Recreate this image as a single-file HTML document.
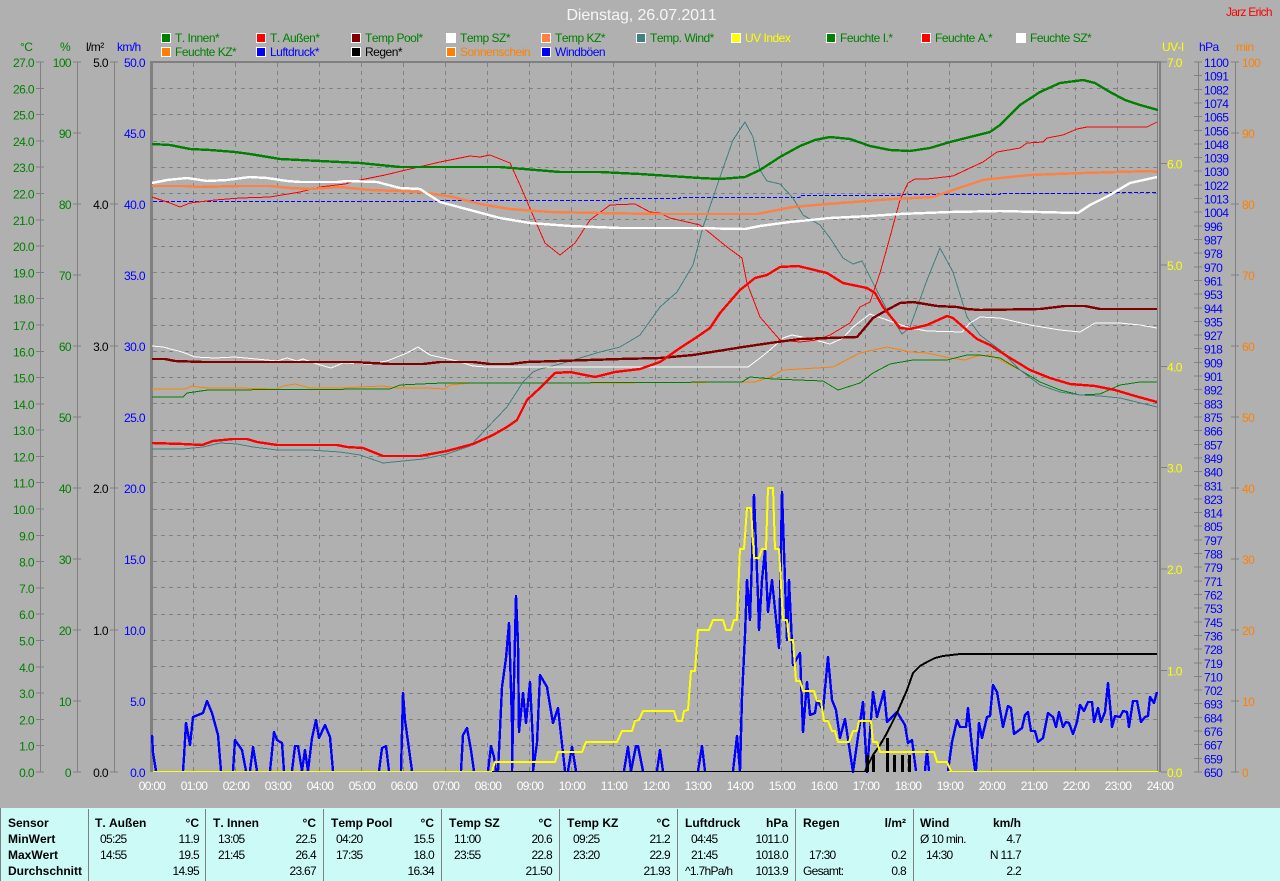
<!DOCTYPE html>
<html lang="de">
<head>
<meta charset="utf-8">
<title>Dienstag, 26.07.2011</title>
<style>
html,body{margin:0;padding:0;background:#b0b0b0;width:1280px;height:881px;overflow:hidden}
svg{display:block;font-family:"Liberation Sans",sans-serif;font-size:12px;letter-spacing:-.6px;font-kerning:none}
.l{fill:none;shape-rendering:crispEdges;stroke-linejoin:round}
.b{font-weight:bold;letter-spacing:0}
.r{text-anchor:end}
</style>
</head>
<body>
<svg width="1280" height="881" viewBox="0 0 1280 881" xmlns="http://www.w3.org/2000/svg">
<rect width="1280" height="881" fill="#b0b0b0"/>

<!-- title -->
<text x="641.5" y="20" text-anchor="middle" fill="#f6f6f6" style="font-size:16px;letter-spacing:-.1px">Dienstag, 26.07.2011</text>
<text x="1226" y="16" fill="#f00" style="letter-spacing:-.75px">Jarz Erich</text>

<!-- legend -->
<g stroke="#fff" shape-rendering="crispEdges">
<rect x="161.5" y="33.5" width="9" height="9" fill="#008000"/>
<rect x="256.5" y="33.5" width="9" height="9" fill="#f00"/>
<rect x="351.5" y="33.5" width="9" height="9" fill="#800000"/>
<rect x="446.5" y="33.5" width="9" height="9" fill="#fff"/>
<rect x="541.5" y="33.5" width="9" height="9" fill="#ff8040"/>
<rect x="636.5" y="33.5" width="9" height="9" fill="#408080"/>
<rect x="731.5" y="33.5" width="9" height="9" fill="#ff0"/>
<rect x="826.5" y="33.5" width="9" height="9" fill="#008000"/>
<rect x="921.5" y="33.5" width="9" height="9" fill="#f00"/>
<rect x="1016.5" y="33.5" width="9" height="9" fill="#fff"/>
<rect x="161.5" y="47.5" width="9" height="9" fill="#ff8000"/>
<rect x="256.5" y="47.5" width="9" height="9" fill="#00f"/>
<rect x="351.5" y="47.5" width="9" height="9" fill="#000"/>
<rect x="446.5" y="47.5" width="9" height="9" fill="#ff8000"/>
<rect x="541.5" y="47.5" width="9" height="9" fill="#00f"/>
</g>
<g fill="#008000" style="letter-spacing:-.5px">
<text x="175" y="42">T. Innen*</text>
<text x="270" y="42">T. Außen*</text>
<text x="365" y="42">Temp Pool*</text>
<text x="460" y="42">Temp SZ*</text>
<text x="555" y="42">Temp KZ*</text>
<text x="650" y="42">Temp. Wind*</text>
<text x="745" y="42" fill="#ff0">UV Index</text>
<text x="840" y="42">Feuchte I.*</text>
<text x="935" y="42">Feuchte A.*</text>
<text x="1030" y="42">Feuchte SZ*</text>
<text x="175" y="56">Feuchte KZ*</text>
<text x="270" y="56" fill="#00f">Luftdruck*</text>
<text x="365" y="56" fill="#000">Regen*</text>
<text x="460" y="56" fill="#ff8000">Sonnenschein</text>
<text x="555" y="56" fill="#00f">Windböen</text>
</g>

<!-- axis headers -->
<text x="20" y="51" fill="#008000">°C</text>
<text x="60" y="51" fill="#008000">%</text>
<text x="86" y="51" fill="#000">l/m²</text>
<text x="117" y="51" fill="#00f">km/h</text>
<text x="1162" y="51" fill="#ff0">UV-I</text>
<text x="1199" y="51" fill="#00f">hPa</text>
<text x="1236" y="51" fill="#ff8000">min</text>

<!-- grid -->
<g class="l" stroke="#808080" stroke-dasharray="4 4">
<path d="M153 88.5H1158M153 114.5H1158M153 141.5H1158M153 167.5H1158M153 193.5H1158M153 219.5H1158M153 246.5H1158M153 272.5H1158M153 298.5H1158M153 325.5H1158M153 351.5H1158M153 377.5H1158M153 403.5H1158M153 430.5H1158M153 456.5H1158M153 482.5H1158M153 509.5H1158M153 535.5H1158M153 561.5H1158M153 587.5H1158M153 614.5H1158M153 640.5H1158M153 666.5H1158M153 693.5H1158M153 719.5H1158M153 745.5H1158"/>
<path d="M193.5 63V772M235.5 63V772M277.5 63V772M319.5 63V772M361.5 63V772M403.5 63V772M445.5 63V772M487.5 63V772M529.5 63V772M571.5 63V772M613.5 63V772M655.5 63V772M697.5 63V772M739.5 63V772M781.5 63V772M823.5 63V772M865.5 63V772M907.5 63V772M949.5 63V772M991.5 63V772M1033.5 63V772M1075.5 63V772M1117.5 63V772"/>
</g>

<!-- frame and axes -->
<g fill="#808080" shape-rendering="crispEdges">
<rect x="150" y="61" width="3" height="711"/>
<rect x="150" y="61" width="1011" height="2"/>
<rect x="1157" y="61" width="1" height="711"/>
<rect x="1159" y="61" width="2" height="711"/>
<rect x="40" y="62" width="1" height="710"/>
<rect x="77" y="62" width="1" height="710"/>
<rect x="114" y="62" width="1" height="710"/>
<rect x="1198" y="62" width="1" height="710"/>
<rect x="1235" y="62" width="1" height="710"/>
</g>
<g class="l" stroke="#808080">
<path d="M40 61.5V773" stroke-width="8" stroke-dasharray="1 25.296"/>
<path d="M77 61.5V773" stroke-width="8" stroke-dasharray="1 70"/>
<path d="M114 61.5V773" stroke-width="8" stroke-dasharray="1 141"/>
<path d="M1198 61.5V773" stroke-width="8" stroke-dasharray="1 12.654"/>
<path d="M1235 61.5V773" stroke-width="8" stroke-dasharray="1 70"/>
<path d="M1164 61.5V773" stroke-width="6" stroke-dasharray="1 100.43"/>
</g>

<!-- axis labels -->
<text fill="#008000" class="r" y="67"><tspan x="34">27.0</tspan><tspan x="34" dy="26.296">26.0</tspan><tspan x="34" dy="26.296">25.0</tspan><tspan x="34" dy="26.296">24.0</tspan><tspan x="34" dy="26.296">23.0</tspan><tspan x="34" dy="26.296">22.0</tspan><tspan x="34" dy="26.296">21.0</tspan><tspan x="34" dy="26.296">20.0</tspan><tspan x="34" dy="26.296">19.0</tspan><tspan x="34" dy="26.296">18.0</tspan><tspan x="34" dy="26.296">17.0</tspan><tspan x="34" dy="26.296">16.0</tspan><tspan x="34" dy="26.296">15.0</tspan><tspan x="34" dy="26.296">14.0</tspan><tspan x="34" dy="26.296">13.0</tspan><tspan x="34" dy="26.296">12.0</tspan><tspan x="34" dy="26.296">11.0</tspan><tspan x="34" dy="26.296">10.0</tspan><tspan x="34" dy="26.296">9.0</tspan><tspan x="34" dy="26.296">8.0</tspan><tspan x="34" dy="26.296">7.0</tspan><tspan x="34" dy="26.296">6.0</tspan><tspan x="34" dy="26.296">5.0</tspan><tspan x="34" dy="26.296">4.0</tspan><tspan x="34" dy="26.296">3.0</tspan><tspan x="34" dy="26.296">2.0</tspan><tspan x="34" dy="26.296">1.0</tspan><tspan x="34" dy="26.296">0.0</tspan></text>
<text fill="#008000" class="r" y="67"><tspan x="71">100</tspan><tspan x="71" dy="71">90</tspan><tspan x="71" dy="71">80</tspan><tspan x="71" dy="71">70</tspan><tspan x="71" dy="71">60</tspan><tspan x="71" dy="71">50</tspan><tspan x="71" dy="71">40</tspan><tspan x="71" dy="71">30</tspan><tspan x="71" dy="71">20</tspan><tspan x="71" dy="71">10</tspan><tspan x="71" dy="71">0</tspan></text>
<text fill="#000" class="r" y="67"><tspan x="108">5.0</tspan><tspan x="108" dy="142">4.0</tspan><tspan x="108" dy="142">3.0</tspan><tspan x="108" dy="142">2.0</tspan><tspan x="108" dy="142">1.0</tspan><tspan x="108" dy="142">0.0</tspan></text>
<text fill="#00f" class="r" y="67"><tspan x="145">50.0</tspan><tspan x="145" dy="71">45.0</tspan><tspan x="145" dy="71">40.0</tspan><tspan x="145" dy="71">35.0</tspan><tspan x="145" dy="71">30.0</tspan><tspan x="145" dy="71">25.0</tspan><tspan x="145" dy="71">20.0</tspan><tspan x="145" dy="71">15.0</tspan><tspan x="145" dy="71">10.0</tspan><tspan x="145" dy="71">5.0</tspan><tspan x="145" dy="71">0.0</tspan></text>
<text fill="#ff0" y="67"><tspan x="1167">7.0</tspan><tspan x="1167" dy="101.43">6.0</tspan><tspan x="1167" dy="101.43">5.0</tspan><tspan x="1167" dy="101.43">4.0</tspan><tspan x="1167" dy="101.43">3.0</tspan><tspan x="1167" dy="101.43">2.0</tspan><tspan x="1167" dy="101.43">1.0</tspan><tspan x="1167" dy="101.43">0.0</tspan></text>
<text fill="#00f" y="67"><tspan x="1204">1100</tspan><tspan x="1204" dy="13.654">1091</tspan><tspan x="1204" dy="13.654">1082</tspan><tspan x="1204" dy="13.654">1074</tspan><tspan x="1204" dy="13.654">1065</tspan><tspan x="1204" dy="13.654">1056</tspan><tspan x="1204" dy="13.654">1048</tspan><tspan x="1204" dy="13.654">1039</tspan><tspan x="1204" dy="13.654">1030</tspan><tspan x="1204" dy="13.654">1022</tspan><tspan x="1204" dy="13.654">1013</tspan><tspan x="1204" dy="13.654">1004</tspan><tspan x="1204" dy="13.654">996</tspan><tspan x="1204" dy="13.654">987</tspan><tspan x="1204" dy="13.654">978</tspan><tspan x="1204" dy="13.654">970</tspan><tspan x="1204" dy="13.654">961</tspan><tspan x="1204" dy="13.654">953</tspan><tspan x="1204" dy="13.654">944</tspan><tspan x="1204" dy="13.654">935</tspan><tspan x="1204" dy="13.654">927</tspan><tspan x="1204" dy="13.654">918</tspan><tspan x="1204" dy="13.654">909</tspan><tspan x="1204" dy="13.654">901</tspan><tspan x="1204" dy="13.654">892</tspan><tspan x="1204" dy="13.654">883</tspan><tspan x="1204" dy="13.654">875</tspan><tspan x="1204" dy="13.654">866</tspan><tspan x="1204" dy="13.654">857</tspan><tspan x="1204" dy="13.654">849</tspan><tspan x="1204" dy="13.654">840</tspan><tspan x="1204" dy="13.654">831</tspan><tspan x="1204" dy="13.654">823</tspan><tspan x="1204" dy="13.654">814</tspan><tspan x="1204" dy="13.654">805</tspan><tspan x="1204" dy="13.654">797</tspan><tspan x="1204" dy="13.654">788</tspan><tspan x="1204" dy="13.654">779</tspan><tspan x="1204" dy="13.654">771</tspan><tspan x="1204" dy="13.654">762</tspan><tspan x="1204" dy="13.654">753</tspan><tspan x="1204" dy="13.654">745</tspan><tspan x="1204" dy="13.654">736</tspan><tspan x="1204" dy="13.654">728</tspan><tspan x="1204" dy="13.654">719</tspan><tspan x="1204" dy="13.654">710</tspan><tspan x="1204" dy="13.654">702</tspan><tspan x="1204" dy="13.654">693</tspan><tspan x="1204" dy="13.654">684</tspan><tspan x="1204" dy="13.654">676</tspan><tspan x="1204" dy="13.654">667</tspan><tspan x="1204" dy="13.654">659</tspan><tspan x="1204" dy="13.654">650</tspan></text>
<text fill="#ff8000" y="67"><tspan x="1242">100</tspan><tspan x="1242" dy="71">90</tspan><tspan x="1242" dy="71">80</tspan><tspan x="1242" dy="71">70</tspan><tspan x="1242" dy="71">60</tspan><tspan x="1242" dy="71">50</tspan><tspan x="1242" dy="71">40</tspan><tspan x="1242" dy="71">30</tspan><tspan x="1242" dy="71">20</tspan><tspan x="1242" dy="71">10</tspan><tspan x="1242" dy="71">0</tspan></text>

<!-- x labels -->
<g fill="#fff" text-anchor="middle" style="letter-spacing:-.7px">
<text x="152" y="790">00:00</text><text x="194" y="790">01:00</text><text x="236" y="790">02:00</text><text x="278" y="790">03:00</text><text x="320" y="790">04:00</text><text x="362" y="790">05:00</text><text x="404" y="790">06:00</text><text x="446" y="790">07:00</text><text x="488" y="790">08:00</text><text x="530" y="790">09:00</text><text x="572" y="790">10:00</text><text x="614" y="790">11:00</text><text x="656" y="790">12:00</text><text x="698" y="790">13:00</text><text x="740" y="790">14:00</text><text x="782" y="790">15:00</text><text x="824" y="790">16:00</text><text x="866" y="790">17:00</text><text x="908" y="790">18:00</text><text x="950" y="790">19:00</text><text x="992" y="790">20:00</text><text x="1034" y="790">21:00</text><text x="1076" y="790">22:00</text><text x="1118" y="790">23:00</text><text x="1160" y="790">24:00</text>
</g>

<!-- series -->
<!-- Luftdruck -->
<path class="l" stroke="#00f" stroke-dasharray="4 2" d="M153 201.5H440V200.5H620V198.5H680V197.5H800V195.5H900V194.5H1000V193.5H1100V192.5H1157"/>
<!-- Feuchte KZ thin -->
<polyline class="l" stroke="#ff8000" points="152,389 185,389 192,386 198,387 208,388 237,388 277,389 283,386 295,384 310,388 343,388 360,387 383,386 397,388 427,388 445,389 450,385 472,383 600,383 742,382 755,382 770,377 783,370 833,367 860,353 887,347 910,352 927,353 950,358 965,360 977,356 990,355 1000,360 1020,370"/>
<!-- Temp Innen thin green -->
<polyline class="l" stroke="#008000" points="152,397 183,397 187,393 208,390 390,389 400,385 420,384 443,383 540,383 742,382 750,377 773,379 823,381 838,390 860,383 873,373 890,364 913,360 947,360 967,355 980,355 1000,358 1020,370 1040,382 1060,390 1080,395 1100,394 1120,385 1140,382 1157,382"/>
<!-- Temp Wind teal -->
<polyline class="l" stroke="#408080" points="152,449 183,449 203,447 220,443 237,444 253,447 277,450 310,450 340,452 360,455 383,463 403,461 423,459 447,454 470,446 487,428 507,407 523,382 533,372 540,369 560,364 580,358 600,352 620,347 640,335 660,307 677,292 693,265 703,227 720,177 733,140 745,122 753,137 760,170 767,181 780,184 793,198 803,215 820,225 830,238 843,258 853,264 862,261 873,283 887,310 902,334 910,327 927,280 940,248 953,272 967,317 980,335 1000,350 1020,370 1040,385 1060,392 1080,395 1100,396 1120,398 1157,407"/>
<!-- Feuchte SZ thin white -->
<polyline class="l" stroke="#fff" points="152,346 163,347 182,352 195,357 215,358 235,357 277,361 287,358 297,361 303,359 317,364 331,368 343,363 370,364 387,361 407,353 418,347 430,355 457,361 473,366 487,367 540,367 660,367 748,367 760,358 770,350 783,338 792,335 807,338 830,344 843,338 853,327 870,314 887,320 910,328 927,331 962,332 970,323 980,317 1000,318 1030,325 1060,330 1080,332 1095,323 1120,323 1140,325 1157,328"/>
<!-- Feuchte A thin red -->
<polyline class="l" stroke="#f00" points="152,197 170,203 180,207 190,203 215,200 240,198 270,197 300,192 320,187 345,184 360,180 385,175 410,169 440,162 470,156 480,157 490,155 510,163 520,185 535,220 545,243 560,255 575,243 590,220 610,205 635,204 650,212 660,213 670,218 700,225 727,247 742,258 747,283 760,317 780,340 800,342 817,340 830,335 850,323 860,307 870,302 880,273 890,237 900,200 908,183 915,179 927,179 953,176 970,168 983,162 997,152 1020,148 1027,143 1043,142 1047,138 1063,135 1077,129 1087,127 1147,127 1157,122"/>
<!-- Temp KZ -->
<polyline class="l" stroke="#ff8040" stroke-width="2.4" points="152,186 185,186 200,187 240,186 270,186 290,188 310,189 340,187 370,190 400,191 420,192 453,197 480,204 510,209 550,212 600,213 660,214 757,214 793,207 827,204 893,199 933,197 953,190 983,180 990,179 1030,175 1083,173 1150,171 1157,172"/>
<!-- Temp SZ thick white -->
<polyline class="l" stroke="#fff" stroke-width="2.4" points="152,183 167,180 187,178 207,181 227,180 250,177 267,178 287,181 300,182 337,182 347,181 377,182 400,188 420,189 440,202 470,210 500,218 530,223 570,226 620,228 690,228 745,229 760,226 790,222 830,218 870,216 900,214 950,212 1000,211 1078,213 1090,205 1110,195 1130,183 1157,177"/>
<!-- Temp Pool -->
<polyline class="l" stroke="#800000" stroke-width="2.4" points="152,359 165,359 175,361 203,362 353,362 390,364 423,364 440,362 473,362 490,364 510,364 527,362 620,359 660,358 693,355 743,347 770,343 800,339 857,337 863,330 873,318 887,310 900,303 913,302 937,306 957,307 967,309 980,310 1040,309 1065,306 1085,306 1100,309 1157,309"/>
<!-- T Aussen -->
<polyline class="l" stroke="#f00" stroke-width="2.4" points="152,443 183,444 202,445 213,441 233,439 247,439 257,442 277,445 337,445 347,447 363,448 383,456 420,456 447,451 473,444 493,435 507,427 517,420 527,400 540,388 555,373 570,372 595,377 615,372 640,369 660,362 680,348 697,337 710,328 720,313 740,290 755,278 767,275 780,267 798,266 827,273 843,283 867,288 875,293 883,307 900,328 910,329 927,325 947,316 953,318 977,339 990,345 1010,358 1030,370 1050,378 1070,384 1095,386 1115,390 1135,396 1157,402"/>
<!-- Feuchte I -->
<polyline class="l" stroke="#008000" stroke-width="2.4" points="152,144 170,145 190,149 210,150 235,152 250,154 280,159 320,161 360,163 400,167 500,167 560,172 600,172 640,174 700,178 720,179 745,177 760,170 780,157 800,146 815,140 830,137 850,139 870,146 890,150 910,151 930,148 950,142 970,137 990,132 1000,125 1020,105 1040,92 1060,83 1083,80 1095,83 1110,92 1125,100 1140,105 1158,110"/>

<!-- wind gusts -->
<path class="l" stroke="#00f" stroke-width="2.4" d="M152 735L153 753L156 771M183 771L184 757L186 723L190 745L193 717L203 713L207 701L212 713L218 735L221 771M233 771L235 740L242 750L246 771M250 771L253 747L257 771M270 771L274 732L277 740L282 743L284 771M292 771L295 746L298 746L302 771L305 750L308 771L312 738L316 720L319 738L325 725L330 737L333 771M379 771L382 748L386 746L389 771M401 771L403 693L405 720L412 771M461 771L463 735L467 728L471 750L474 771M488 771L491 746L494 757L496 771M498 771L500 730L502 687L506 658L509 623L512 723L512 771L513 723L516 596L518 643L519 732L523 693L526 723L530 682L533 743L533 771L537 743L540 675L547 687L553 723L558 708L565 771M568 771L572 747L576 771M624 771L628 747L631 771L636 746L638 746L643 771M657 771L660 750L663 771M698 771L702 746L705 771M733 771L737 736L740 771L742 697L745 635L747 580L750 620L754 495L758 597L759 630L762 580L765 550L768 612L772 580L779 648L782 492L787 640L789 580L793 665L800 653L803 732L807 682L810 715L815 713L817 700L823 710L828 657L832 700L836 710L840 738L845 719L853 772L863 702L867 772L873 692L877 717L884 691L887 722L897 712L905 725L908 743L912 740L916 771M927 750L929 771M925 771L927 750M948 771L952 742L957 720L960 727L966 727L968 708L972 747L975 770L976 770L979 723L982 738L987 717L990 716L993 685L997 692L1003 727L1008 706L1011 708L1014 734L1022 728L1025 715L1028 712L1031 731L1035 731L1038 742L1043 738L1048 713L1053 717L1056 727L1059 712L1063 727L1066 722L1069 723L1073 734L1077 722L1080 705L1084 711L1088 702L1092 702L1094 722L1098 708L1101 722L1105 712L1108 683L1112 727L1115 716L1120 717L1123 711L1127 712L1129 727L1133 701L1137 701L1141 722L1145 717L1148 716L1150 697L1154 703L1157 692"/>
<!-- rain bars -->
<g fill="#000" shape-rendering="crispEdges">
<rect x="866" y="755" width="3" height="17"/>
<rect x="872" y="755" width="3" height="17"/>
<rect x="886" y="738" width="3" height="34"/>
<rect x="893" y="755" width="3" height="17"/>
<rect x="901" y="755" width="3" height="17"/>
<rect x="908" y="755" width="3" height="17"/>
</g>
<!-- rain total -->
<path class="l" stroke="#000" d="M492 771.5H866"/>
<polyline class="l" stroke="#000" stroke-width="2" points="865,771 867,767 873,755 880,745 887,733 897,713 907,690 913,673 920,666 927,662 935,658 943,656 960,654 1157,654"/>
<!-- uv baseline -->
<path class="l" stroke="#ff0" d="M153 771.5H492M948 771.5H1158"/>
<!-- uv -->
<polyline class="l" stroke="#ff0" stroke-width="2" points="492,771 495,762 555,762 558,752 582,752 586,742 617,742 622,731 632,731 635,721 639,720 643,711 674,711 677,721 682,721 684,711 688,710 691,671 695,671 698,630 709,630 713,620 723,620 726,630 731,630 734,620 737,620 740,549 744,549 747,508 751,508 754,558 759,558 762,549 766,549 768,488 773,488 775,549 779,549 783,620 787,620 789,640 793,640 796,681 800,681 803,691 814,691 817,701 821,701 824,721 828,721 832,731 835,731 838,742 849,742 853,731 857,731 859,721 871,721 873,742 877,742 880,752 934,752 937,762 947,762 951,771"/>

<!-- table -->
<rect x="0" y="808" width="1280" height="73" fill="#ccfaf7"/>
<g fill="#808080" shape-rendering="crispEdges">
<rect x="0" y="808" width="1" height="73"/>
<rect x="88" y="809" width="1" height="72"/>
<rect x="205" y="809" width="1" height="72"/>
<rect x="323" y="809" width="1" height="72"/>
<rect x="441" y="809" width="1" height="72"/>
<rect x="559" y="809" width="1" height="72"/>
<rect x="677" y="809" width="1" height="72"/>
<rect x="795" y="809" width="1" height="72"/>
<rect x="913" y="809" width="1" height="72"/>
</g>
<g fill="#000" class="b">
<text x="8" y="827">Sensor</text><text x="8" y="843">MinWert</text><text x="8" y="859">MaxWert</text><text x="8" y="875">Durchschnitt</text>
<text x="95" y="827">T. Außen</text><text x="199" y="827" class="r">°C</text>
<text x="213" y="827">T. Innen</text><text x="316" y="827" class="r">°C</text>
<text x="331" y="827">Temp Pool</text><text x="434" y="827" class="r">°C</text>
<text x="449" y="827">Temp SZ</text><text x="552" y="827" class="r">°C</text>
<text x="567" y="827">Temp KZ</text><text x="670" y="827" class="r">°C</text>
<text x="685" y="827">Luftdruck</text><text x="788" y="827" class="r">hPa</text>
<text x="803" y="827">Regen</text><text x="906" y="827" class="r">l/m²</text>
<text x="920" y="827">Wind</text><text x="1021" y="827" class="r">km/h</text>
</g>
<g fill="#000" style="letter-spacing:-.7px">
<text x="100" y="843">05:25</text><text x="199" y="843" class="r">11.9</text>
<text x="100" y="859">14:55</text><text x="199" y="859" class="r">19.5</text>
<text x="199" y="875" class="r">14.95</text>
<text x="218" y="843">13:05</text><text x="316" y="843" class="r">22.5</text>
<text x="218" y="859">21:45</text><text x="316" y="859" class="r">26.4</text>
<text x="316" y="875" class="r">23.67</text>
<text x="336" y="843">04:20</text><text x="434" y="843" class="r">15.5</text>
<text x="336" y="859">17:35</text><text x="434" y="859" class="r">18.0</text>
<text x="434" y="875" class="r">16.34</text>
<text x="454" y="843">11:00</text><text x="552" y="843" class="r">20.6</text>
<text x="454" y="859">23:55</text><text x="552" y="859" class="r">22.8</text>
<text x="552" y="875" class="r">21.50</text>
<text x="573" y="843">09:25</text><text x="670" y="843" class="r">21.2</text>
<text x="573" y="859">23:20</text><text x="670" y="859" class="r">22.9</text>
<text x="670" y="875" class="r">21.93</text>
<text x="691" y="843">04:45</text><text x="788" y="843" class="r">1011.0</text>
<text x="691" y="859">21:45</text><text x="788" y="859" class="r">1018.0</text>
<text x="685" y="875">^1.7hPa/h</text><text x="788" y="875" class="r">1013.9</text>
<text x="809" y="859">17:30</text><text x="906" y="859" class="r">0.2</text>
<text x="803" y="875">Gesamt:</text><text x="906" y="875" class="r">0.8</text>
<text x="920" y="843">Ø 10 min.</text><text x="1021" y="843" class="r">4.7</text>
<text x="926" y="859">14:30</text><text x="1021" y="859" class="r">N 11.7</text>
<text x="1021" y="875" class="r">2.2</text>
</g>
</svg>
</body>
</html>
